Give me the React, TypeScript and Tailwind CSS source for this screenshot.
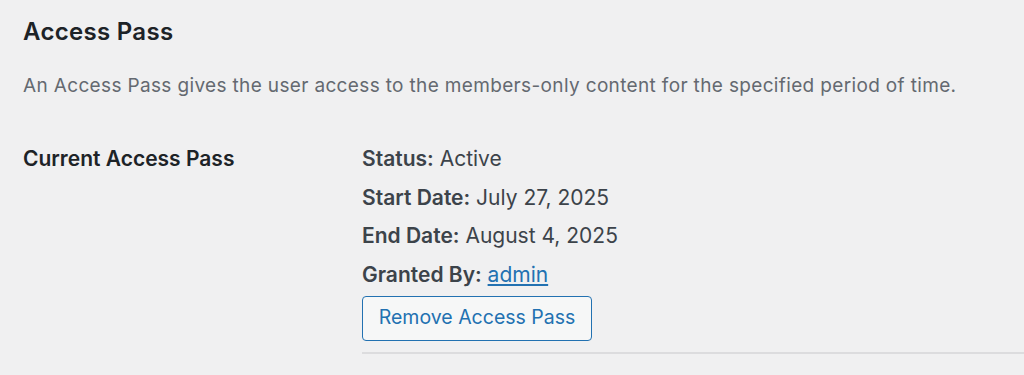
import React from "react";

const rows = [
  { label: "Status:", value: "Active" },
  { label: "Start Date:", value: "July 27, 2025" },
  { label: "End Date:", value: "August 4, 2025" },
];

export default function App() {
  return (
    <div
      className="min-h-[375px] w-full bg-[#f0f0f1] pl-[23px] text-[#3c434a]"
      style={{ fontFamily: "Inter, 'Noto Sans', sans-serif" }}
    >
      <h2 className="pt-[18px] text-[24px] leading-[28px] font-semibold tracking-[0.3px] text-[#1d2327]">
        Access Pass
      </h2>
      <p className="mt-[28px] text-[19px] leading-[24px] tracking-[0.35px] text-[#646970]">
        An Access Pass gives the user access to the members-only content for the specified period of time.
      </p>

      <div className="mt-[49px] flex">
        <div className="w-[339px] shrink-0 text-[21px] leading-[24px] font-semibold text-[#1d2327]">
          Current Access Pass
        </div>
        <div className="flex-1">
          {rows.map((r) => (
            <div key={r.label} className="mb-[14.5px] text-[21px] leading-[24px]">
              <span className="font-semibold">{r.label}</span> {r.value}
            </div>
          ))}
          <div className="text-[21px] leading-[24px]">
            <span className="font-semibold">Granted By:</span>{" "}
            <a href="#" className="text-[#2271b1] underline">
              admin
            </a>
          </div>
          <button className="mt-[9px] h-[45px] w-[230px] rounded-[4px] border border-[#2271b1] bg-[#f6f7f7] text-[19.5px] text-[#2271b1]">
            Remove Access Pass
          </button>
          <div className="mt-[11px] h-[2px] bg-[#dcdcde]" />
        </div>
      </div>
    </div>
  );
}
